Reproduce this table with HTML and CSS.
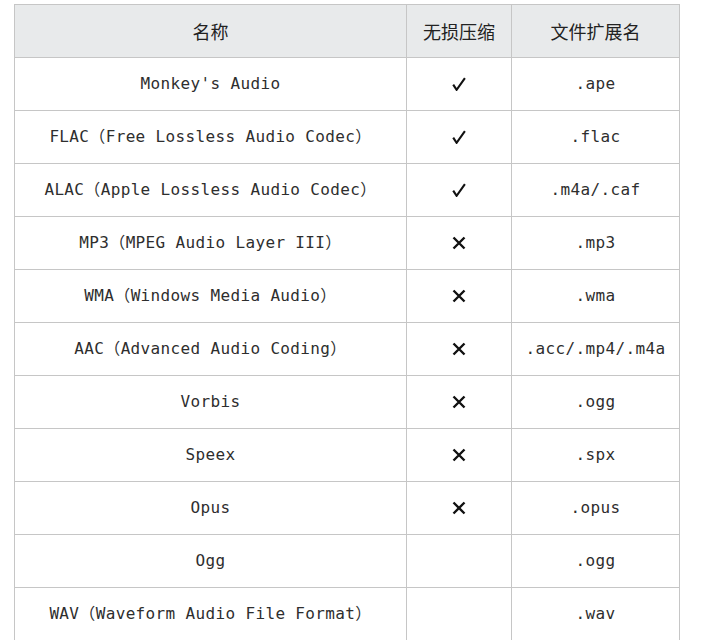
FILE: index.html
```html
<!DOCTYPE html>
<html lang="zh">
<head>
<meta charset="utf-8">
<link rel="stylesheet" href="styles.css">
</head>
<body>
<table class="fmt">
  <colgroup>
    <col class="c-name"><col class="c-loss"><col class="c-ext">
  </colgroup>
  <thead>
    <tr><th>名称</th><th>无损压缩</th><th>文件扩展名</th></tr>
  </thead>
  <tbody>
    <tr><td>Monkey's Audio</td><td class="sym"><svg class="ico" viewBox="0 0 14 14"><path d="M1.2 7.6 L4.6 12.8 L12.9 1.2" fill="none" stroke="#111" stroke-width="2.1"/></svg></td><td>.ape</td></tr>
    <tr><td>FLAC（Free Lossless Audio Codec）</td><td class="sym"><svg class="ico" viewBox="0 0 14 14"><path d="M1.2 7.6 L4.6 12.8 L12.9 1.2" fill="none" stroke="#111" stroke-width="2.1"/></svg></td><td>.flac</td></tr>
    <tr><td>ALAC（Apple Lossless Audio Codec）</td><td class="sym"><svg class="ico" viewBox="0 0 14 14"><path d="M1.2 7.6 L4.6 12.8 L12.9 1.2" fill="none" stroke="#111" stroke-width="2.1"/></svg></td><td>.m4a/.caf</td></tr>
    <tr><td>MP3（MPEG Audio Layer III）</td><td class="sym"><svg class="ico" viewBox="0 0 14 14"><path d="M1.5 1.5 L12.5 12.5 M12.5 1.5 L1.5 12.5" stroke="#111" stroke-width="2.4"/></svg></td><td>.mp3</td></tr>
    <tr><td>WMA（Windows Media Audio）</td><td class="sym"><svg class="ico" viewBox="0 0 14 14"><path d="M1.5 1.5 L12.5 12.5 M12.5 1.5 L1.5 12.5" stroke="#111" stroke-width="2.4"/></svg></td><td>.wma</td></tr>
    <tr><td>AAC（Advanced Audio Coding）</td><td class="sym"><svg class="ico" viewBox="0 0 14 14"><path d="M1.5 1.5 L12.5 12.5 M12.5 1.5 L1.5 12.5" stroke="#111" stroke-width="2.4"/></svg></td><td>.acc/.mp4/.m4a</td></tr>
    <tr><td>Vorbis</td><td class="sym"><svg class="ico" viewBox="0 0 14 14"><path d="M1.5 1.5 L12.5 12.5 M12.5 1.5 L1.5 12.5" stroke="#111" stroke-width="2.4"/></svg></td><td>.ogg</td></tr>
    <tr><td>Speex</td><td class="sym"><svg class="ico" viewBox="0 0 14 14"><path d="M1.5 1.5 L12.5 12.5 M12.5 1.5 L1.5 12.5" stroke="#111" stroke-width="2.4"/></svg></td><td>.spx</td></tr>
    <tr><td>Opus</td><td class="sym"><svg class="ico" viewBox="0 0 14 14"><path d="M1.5 1.5 L12.5 12.5 M12.5 1.5 L1.5 12.5" stroke="#111" stroke-width="2.4"/></svg></td><td>.opus</td></tr>
    <tr><td>Ogg</td><td class="sym"></td><td>.ogg</td></tr>
    <tr><td>WAV（Waveform Audio File Format）</td><td class="sym"></td><td>.wav</td></tr>
  </tbody>
</table>
</body>
</html>
```

FILE: styles.css
```css
html, body {
  margin: 0;
  padding: 0;
  background: #ffffff;
}
body {
  padding: 4px 0 0 14px;
}
.fmt {
  border-collapse: collapse;
  table-layout: fixed;
  width: 665px;
  font-family: "DejaVu Sans Mono", "Noto Sans CJK SC", monospace;
  font-size: 16px;
  line-height: 20px;
  letter-spacing: 0.35px;
  color: #2e2e2e;
}
.c-name { width: 392px; }
.c-loss { width: 105px; }
.c-ext { width: 168px; }
.fmt th, .fmt td {
  border: 1px solid #c6c6c6;
  height: 52px;
  padding: 0;
  text-align: center;
  vertical-align: middle;
}
.fmt th {
  background: #e8eaeb;
  font-family: "Noto Sans CJK SC", sans-serif;
  font-weight: 400;
  font-size: 18px;
  line-height: 22px;
  letter-spacing: 0;
  color: #222222;
}
.fmt td.sym {
  line-height: 0;
}
.ico {
  width: 14px;
  height: 14px;
  display: inline-block;
}
```
